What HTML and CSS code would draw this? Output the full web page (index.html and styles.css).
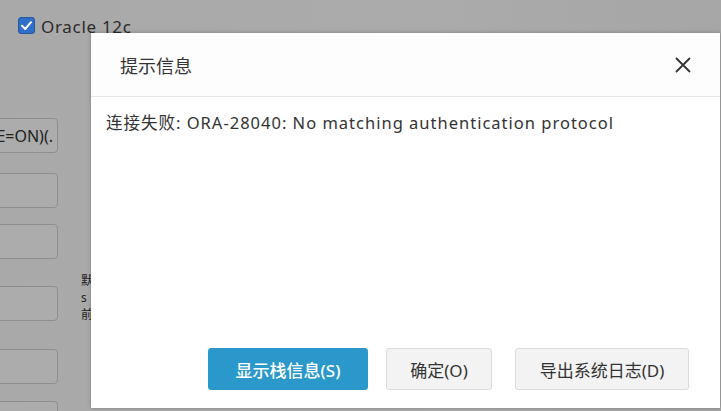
FILE: index.html
```html
<!DOCTYPE html>
<html lang="zh-CN">
<head>
  <meta charset="UTF-8">
  <title>提示信息</title>
  <link rel="stylesheet" href="styles.css">
</head>
<body>
  <div class="screen">
    <!-- form behind the dialog -->
    <div class="form">
      <label class="check-row">
        <span class="checkbox">
          <svg width="17" height="17" viewBox="0 0 17 17">
            <rect x="0.5" y="0.5" width="16" height="16" rx="2.5" fill="#2f6fc9" stroke="#28589c"/>
            <path d="M4 8.8 L7.2 12 L13 5.2" fill="none" stroke="#fff" stroke-width="2" stroke-linecap="round" stroke-linejoin="round"/>
          </svg>
        </span>
        <span class="check-label">Oracle 12c</span>
      </label>

      <div class="fields">
        <div class="field f1"><span>E=ON)(.</span></div>
        <div class="field f2"></div>
        <div class="field f3"></div>
        <div class="field f4"></div>
        <div class="field f5"></div>
        <div class="field f6"></div>
      </div>

      <div class="side-note">默<br>s<br>前</div>
    </div>

    <!-- dialog -->
    <div class="dialog">
      <div class="dialog-head">
        <span class="dialog-title">提示信息</span>
        <svg class="close" width="18" height="18" viewBox="0 0 18 18">
          <path d="M2 2 L16 16 M16 2 L2 16" stroke="#333" stroke-width="1.8" fill="none"/>
        </svg>
      </div>
      <div class="dialog-body">
        连接失败: ORA-28040: No matching authentication protocol
      </div>
      <div class="dialog-foot">
        <button class="btn btn-primary">显示栈信息(S)</button>
        <button class="btn btn-ok">确定(O)</button>
        <button class="btn btn-export">导出系统日志(D)</button>
      </div>
    </div>
  </div>
</body>
</html>
```

FILE: styles.css
```css
body {
  margin: 0;
  background-color: #a8a8a8;
  font-family: "Noto Sans", "Noto Sans CJK SC", sans-serif;
  color: #333;
}

.screen {
  position: relative;
  width: 721px;
  height: 411px;
  overflow: hidden;
  background: linear-gradient(to right, #a9a9a9 0%, #ababab 60%, #a6a6a6 100%);
}

.form {
  padding-top: 17px;
}

.check-row {
  display: flex;
  align-items: center;
  gap: 6px;
  margin-left: 18px;
  height: 17px;
}

.checkbox {
  display: flex;
}

.check-label {
  font-size: 17px;
  letter-spacing: 0.7px;
  color: #2b2b2b;
  line-height: 17px;
  padding-top: 1px;
}

.fields {
  display: flex;
  flex-direction: column;
  margin-top: 84px;
  margin-left: -40px;
  width: 98px;
}

.field {
  height: 33px;
  border: 1px solid #8e8e8e;
  border-radius: 4px;
  background-color: #acacac;
  display: flex;
  align-items: center;
  justify-content: flex-end;
  padding-right: 4px;
  font-size: 16px;
  color: #222;
}

.f2 { margin-top: 20px; }
.f3 { margin-top: 16px; }
.f4 { margin-top: 27px; }
.f5 { margin-top: 28px; }
.f6 { margin-top: 17px; }

.side-note {
  position: absolute;
  left: 81px;
  top: 272px;
  font-size: 12px;
  line-height: 17px;
  color: #222;
}

.dialog {
  position: absolute;
  left: 91px;
  top: 33px;
  width: 629px;
  height: 375px;
  background-color: #fff;
  box-shadow: 0 0 4px rgba(0, 0, 0, 0.25);
  display: flex;
  flex-direction: column;
}

.dialog-head {
  height: 63px;
  border-bottom: 1px solid #e6e6e6;
  display: flex;
  align-items: center;
  justify-content: space-between;
  padding: 0 28px 0 29px;
  background-color: #fdfdfd;
}

.dialog-title {
  font-size: 18px;
  color: #333;
}

.dialog-body {
  flex: 1;
  padding: 13px 15px;
  font-size: 16.5px;
  letter-spacing: 1px;
  color: #333;
  line-height: 26px;
}

.dialog-foot {
  display: flex;
  padding: 0 31px 18px 117px;
  gap: 18px;
}

.btn {
  height: 42px;
  border-radius: 3px;
  font-family: "Noto Sans", "Noto Sans CJK SC", sans-serif;
  font-size: 17px;
  border: 1px solid #dcdcdc;
  background-color: #f3f3f3;
  color: #333;
  padding: 0;
}

.btn-primary {
  width: 160px;
  background-color: #2a98ca;
  border-color: #2a98ca;
  color: #fff;
  font-weight: 500;
}

.btn-ok {
  width: 106px;
}

.btn-export {
  width: 174px;
  margin-left: 5px;
}
```
